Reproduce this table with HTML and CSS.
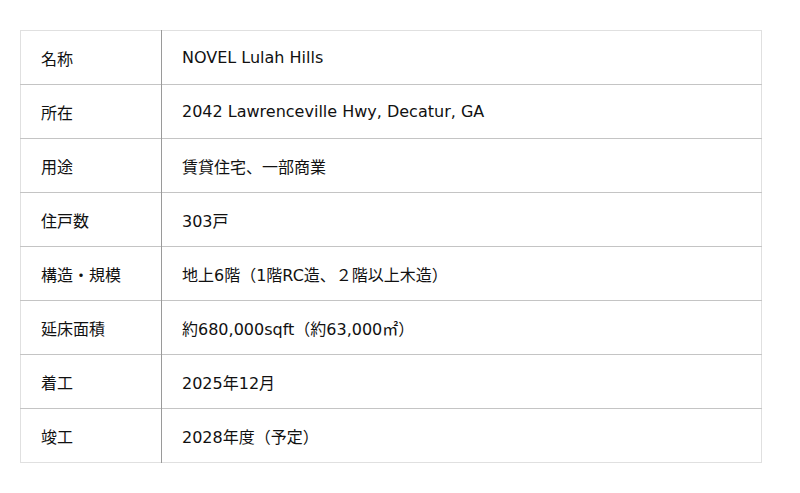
FILE: index.html
```html
<!DOCTYPE html>
<html lang="ja">
<head>
<meta charset="utf-8">
<link rel="stylesheet" href="styles.css">
</head>
<body>
<div class="wrap">
<table class="spec">
<tr><th>名称</th><td>NOVEL Lulah Hills</td></tr>
<tr><th>所在</th><td>2042 Lawrenceville Hwy, Decatur, GA</td></tr>
<tr><th>用途</th><td>賃貸住宅、一部商業</td></tr>
<tr><th>住戸数</th><td>303戸</td></tr>
<tr><th>構造・規模</th><td>地上6階（1階RC造、２階以上木造）</td></tr>
<tr><th>延床面積</th><td>約680,000sqft（約63,000㎡）</td></tr>
<tr><th>着工</th><td>2025年12月</td></tr>
<tr><th>竣工</th><td>2028年度（予定）</td></tr>
</table>
</div>
</body>
</html>
```
FILE: styles.css
```css
html, body {
  margin: 0;
  padding: 0;
  background: #fff;
}
body {
  font-family: "DejaVu Sans", "Noto Sans CJK JP", sans-serif;
  font-size: 16px;
  color: #111;
}
.wrap {
  padding: 30px 0 0 20px;
}
.spec {
  width: 742px;
  border-collapse: collapse;
  border: 1px solid #e0e0e0;
}
.spec th, .spec td {
  height: 54px;
  padding: 0 20px;
  text-align: left;
  font-weight: normal;
  border-top: 1px solid #c4c4c4;
  vertical-align: middle;
  box-sizing: border-box;
}
.spec tr:first-child th, .spec tr:first-child td {
  border-top: 1px solid #e0e0e0;
}
.spec th {
  width: 141px;
  border-right: 1px solid #9a9a9a;
}
```
